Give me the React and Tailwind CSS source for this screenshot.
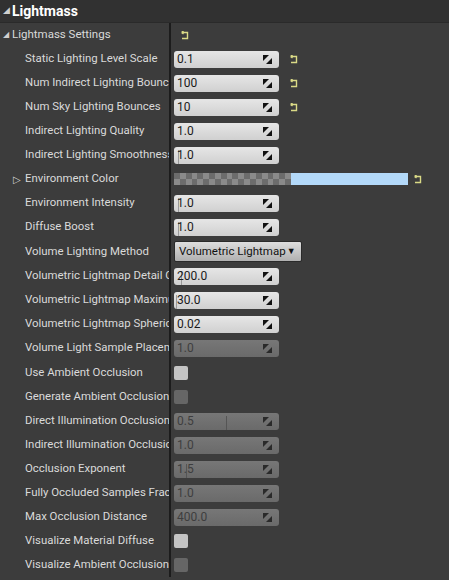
import React from 'react';

const ROWS = [
  { label: 'Static Lighting Level Scale', type: 'num', value: '0.1', reset: true },
  { label: 'Num Indirect Lighting Bounces', type: 'num', value: '100', reset: true },
  { label: 'Num Sky Lighting Bounces', type: 'num', value: '10', reset: true },
  { label: 'Indirect Lighting Quality', type: 'num', value: '1.0' },
  { label: 'Indirect Lighting Smoothness', type: 'num', value: '1.0', slider: 4 },
  { label: 'Environment Color', type: 'color', expander: true },
  { label: 'Environment Intensity', type: 'num', value: '1.0', slider: 4 },
  { label: 'Diffuse Boost', type: 'num', value: '1.0', slider: 4 },
  { label: 'Volume Lighting Method', type: 'combo', value: 'Volumetric Lightmap', tall: true },
  { label: 'Volumetric Lightmap Detail Cell Size', type: 'num', value: '200.0', slider: 7 },
  { label: 'Volumetric Lightmap Maximum Brick Memory', type: 'num', value: '30.0', slider: 2 },
  { label: 'Volumetric Lightmap Spherical Harmonic Smoothing', type: 'num', value: '0.02' },
  { label: 'Volume Light Sample Placement Scale', type: 'num', value: '1.0', disabled: true },
  { label: 'Use Ambient Occlusion', type: 'check', tall: true },
  { label: 'Generate Ambient Occlusion Material', type: 'check', disabled: true },
  { label: 'Direct Illumination Occlusion Fraction', type: 'num', value: '0.5', disabled: true, slider: 52 },
  { label: 'Indirect Illumination Occlusion Fraction', type: 'num', value: '1.0', disabled: true },
  { label: 'Occlusion Exponent', type: 'num', value: '1.5', disabled: true, slider: 12 },
  { label: 'Fully Occluded Samples Fraction', type: 'num', value: '1.0', disabled: true },
  { label: 'Max Occlusion Distance', type: 'num', value: '400.0', disabled: true },
  { label: 'Visualize Material Diffuse', type: 'check' },
  { label: 'Visualize Ambient Occlusion', type: 'check', disabled: true },
];

function ResetIcon() {
  return (
    <svg width="9" height="9" viewBox="0 0 9 9" className="shrink-0">
      <path d="M1.5 1.5 L3.5 0 M1.5 1.5 L3.5 3 M1.5 1.5 H7.5 V7.5 H2" fill="none" stroke="#dada86" strokeWidth="1.4" />
    </svg>
  );
}

function SpinIcon({ disabled }) {
  const c = disabled ? '#2a2a2a' : '#111';
  return (
    <svg width="9" height="9" viewBox="0 0 9 9" className="shrink-0">
      <polygon points="0,0 6,0 0,6" fill={c} />
      <polygon points="9,3 9,9 3,9" fill={c} />
    </svg>
  );
}

function NumBox({ value, disabled, slider }) {
  return (
    <div
      className={`relative flex items-center w-[105px] h-[17px] rounded-[3px] pl-[3px] pr-[7px] ${
        disabled
          ? 'bg-gradient-to-b from-[#777] to-[#6a6a6a] text-[#3e3e3e]'
          : 'bg-gradient-to-b from-[#e6e6e6] to-[#d0d0d0] text-[#1a1a1a]'
      }`}
    >
      {slider !== undefined && (
        <div className={`absolute top-[3px] bottom-0 w-px ${disabled ? 'bg-[#555]' : 'bg-[#999]'}`} style={{ left: slider }} />
      )}
      <span className="flex-1 text-[12px] leading-none relative">{value}</span>
      <SpinIcon disabled={disabled} />
    </div>
  );
}

function Checker() {
  const cells = [];
  for (let i = 0; i < 20; i++) {
    cells.push(
      <div key={i} className="flex flex-col w-[6px]">
        <div className={`h-[6px] ${i % 2 ? 'bg-[#8a8a8a]' : 'bg-[#6c6c6c]'}`} />
        <div className={`h-[6px] ${i % 2 ? 'bg-[#6c6c6c]' : 'bg-[#8a8a8a]'}`} />
      </div>
    );
  }
  return <div className="flex w-[117px] h-[12px] overflow-hidden">{cells}</div>;
}

function Value({ row }) {
  if (row.type === 'num') return <NumBox value={row.value} disabled={row.disabled} slider={row.slider} />;
  if (row.type === 'check')
    return (
      <div className={`w-[14px] h-[14px] rounded-[2px] ${row.disabled ? 'bg-[#666]' : 'bg-[#c4c4c4]'}`} />
    );
  if (row.type === 'color')
    return (
      <div className="flex items-center">
        <Checker />
        <div className="w-[117px] h-[12px] bg-[#b3d9f9]" />
        <div className="ml-[5px]"><ResetIcon /></div>
      </div>
    );
  if (row.type === 'combo')
    return (
      <div className="flex items-center gap-[1px] h-[21px] w-[128px] px-[4px] rounded-[2px] border border-[#2a2a2a] bg-gradient-to-b from-[#dedede] to-[#b0b0b0] text-[#111] text-[11.5px] whitespace-nowrap">
        <span>{row.value}</span>
        <span className="text-[9px]">▼</span>
      </div>
    );
  return null;
}

export default function App() {
  return (
    <div className="w-[449px] h-[580px] bg-[#3c3c3c] overflow-hidden text-[#dadada]" style={{ fontFamily: 'Roboto, "Noto Sans", sans-serif' }}>
      <div className="h-[23px] flex items-center bg-[#313131] border-b border-[#2a2a2a] pl-[3px]">
        <span className="text-[9px] text-[#cfcfcf] mr-[2px]">◢</span>
        <span className="text-[14px] font-bold text-white">Lightmass</span>
      </div>
      <div className="flex">
        <div className="w-[171px] shrink-0 border-r-2 border-[#1c1c1c]">
          <div className="h-[24px] flex items-center pl-[3px] overflow-hidden whitespace-nowrap">
            <span className="text-[8px] text-[#cfcfcf] mr-[3px]">◢</span>
            <span className="text-[11.5px]">Lightmass Settings</span>
          </div>
          {ROWS.map((r, i) => (
            <div key={i} className={`${r.tall ? 'h-[25px]' : 'h-[24px]'} flex items-center overflow-hidden whitespace-nowrap`}>
              <span className="w-[25px] shrink-0 pl-[13px] text-[10px] text-[#cfcfcf]">{r.expander ? '▷' : ''}</span>
              <span className="text-[11.4px]">{r.label}</span>
            </div>
          ))}
        </div>
        <div className="flex-1 pl-[3px]">
          <div className="h-[24px] flex items-center pl-[6px]">
            <ResetIcon />
          </div>
          {ROWS.map((r, i) => (
            <div key={i} className={`${r.tall ? 'h-[25px]' : 'h-[24px]'} flex items-center`}>
              <Value row={r} />
              {r.reset && r.type === 'num' && (
                <div className="ml-[10px]"><ResetIcon /></div>
              )}
            </div>
          ))}
        </div>
      </div>
    </div>
  );
}
